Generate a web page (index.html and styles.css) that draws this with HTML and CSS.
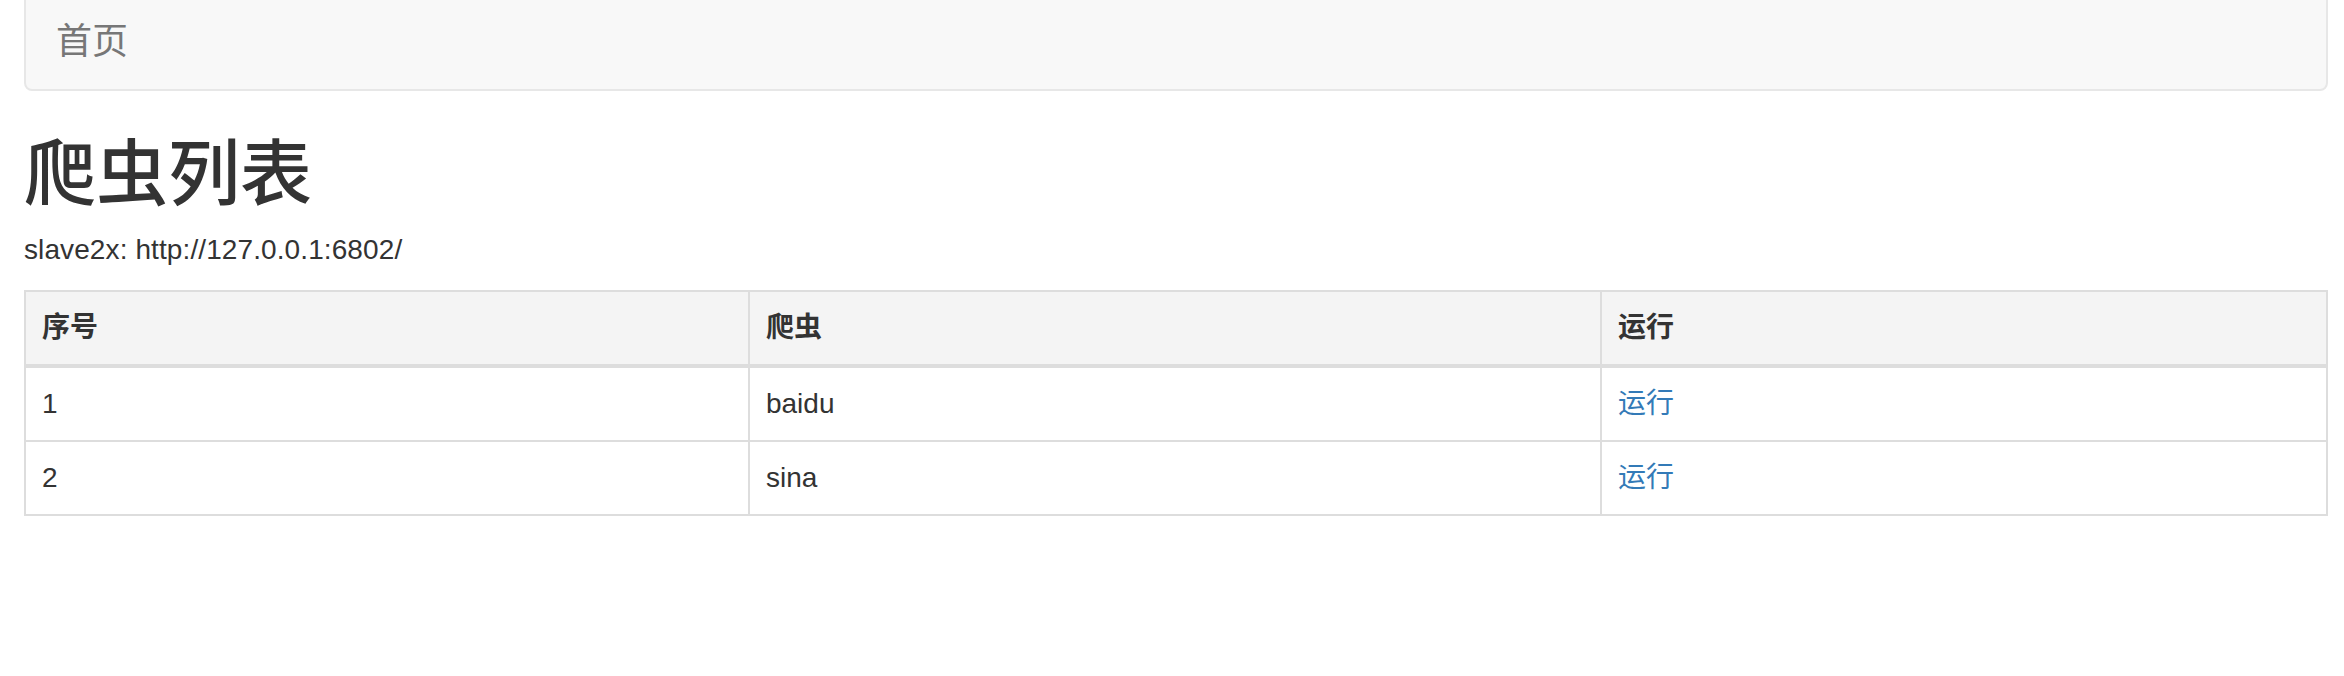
FILE: index.html
```html
<!DOCTYPE html>
<html lang="zh-CN">
<head>
<meta charset="utf-8">
<title>爬虫列表</title>
<link rel="stylesheet" href="styles.css">
</head>
<body>
<div class="page">
  <nav class="navbar">
    <a class="brand" href="#">首页</a>
  </nav>
  <h1 class="title">爬虫列表</h1>
  <p class="server">slave2x: http://127.0.0.1:6802/</p>
  <table class="spiders">
    <colgroup>
      <col class="c-num">
      <col class="c-name">
      <col class="c-run">
    </colgroup>
    <thead>
      <tr><th>序号</th><th>爬虫</th><th>运行</th></tr>
    </thead>
    <tbody>
      <tr><td>1</td><td>baidu</td><td><a class="run" href="#">运行</a></td></tr>
      <tr><td>2</td><td>sina</td><td><a class="run" href="#">运行</a></td></tr>
    </tbody>
  </table>
</div>
</body>
</html>
```

FILE: styles.css
```css
html, body {
  margin: 0;
  padding: 0;
  background: #fff;
}
body {
  font-family: "Liberation Sans", Arial, "Noto Sans CJK SC", sans-serif;
  font-size: 28px;
  line-height: 40px;
  color: #333;
}
.page {
  padding: 0 16px 0 24px;
}
.navbar {
  margin-top: -13px;
  margin-bottom: 40px;
  min-height: 100px;
  background: #f8f8f8;
  border: 2px solid #e7e7e7;
  border-radius: 8px;
  display: flex;
  align-items: flex-start;
}
.brand {
  display: block;
  padding: 33px 30px 27px;
  font-size: 36px;
  line-height: 40px;
  height: 100px;
  box-sizing: border-box;
  color: #777;
  text-decoration: none;
}
.title {
  margin: 40px 0 16px;
  padding-top: 4px;
  font-size: 72px;
  line-height: 1.1;
  font-weight: 500;
  color: #333;
}
.server {
  margin: 0 0 20px;
  letter-spacing: 0.1px;
}
.spiders {
  width: 100%;
  border-collapse: collapse;
  border-spacing: 0;
  table-layout: fixed;
  border: 2px solid #ddd;
  margin-bottom: 40px;
}
.c-num { width: 31.45%; }
.c-name { width: 37.01%; }
.c-run { width: 31.54%; }
.spiders th,
.spiders td {
  border: 2px solid #ddd;
  padding: 16px;
  text-align: left;
  vertical-align: top;
  line-height: 40px;
}
.spiders thead th {
  background: #f4f4f4;
  font-weight: bold;
  border-bottom-width: 4px;
  vertical-align: bottom;
}
.run {
  color: #337ab7;
  text-decoration: none;
}
```
